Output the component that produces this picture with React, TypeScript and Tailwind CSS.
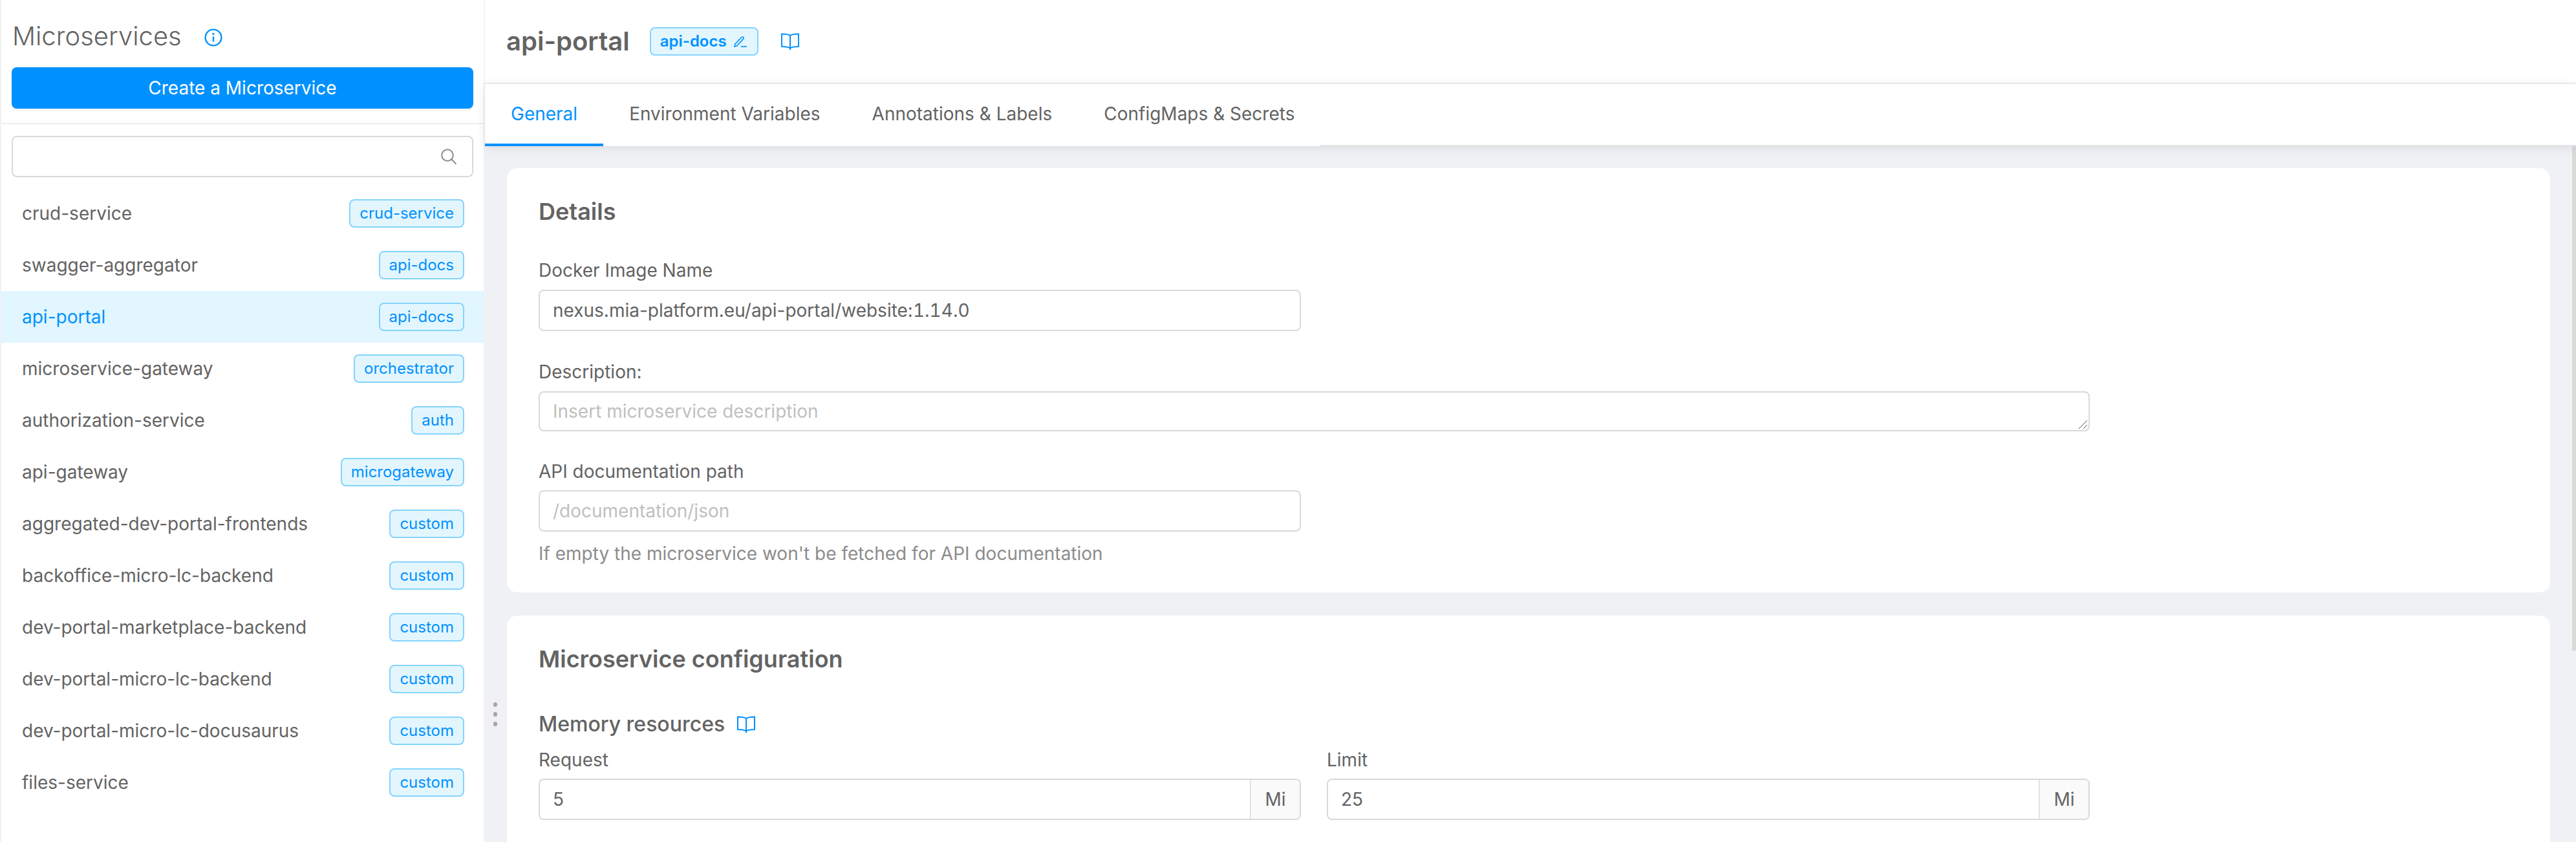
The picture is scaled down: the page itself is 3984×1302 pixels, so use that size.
import React from 'react';

const SERVICES = [
  { name: 'crud-service', tag: 'crud-service' },
  { name: 'swagger-aggregator', tag: 'api-docs' },
  { name: 'api-portal', tag: 'api-docs', active: true },
  { name: 'microservice-gateway', tag: 'orchestrator' },
  { name: 'authorization-service', tag: 'auth' },
  { name: 'api-gateway', tag: 'microgateway' },
  { name: 'aggregated-dev-portal-frontends', tag: 'custom' },
  { name: 'backoffice-micro-lc-backend', tag: 'custom' },
  { name: 'dev-portal-marketplace-backend', tag: 'custom' },
  { name: 'dev-portal-micro-lc-backend', tag: 'custom' },
  { name: 'dev-portal-micro-lc-docusaurus', tag: 'custom' },
  { name: 'files-service', tag: 'custom' },
];

const TABS = ['General', 'Environment Variables', 'Annotations & Labels', 'ConfigMaps & Secrets'];

const BookIcon: React.FC = () => (
  <svg viewBox="0 0 28 26" className="w-7 h-[26px] text-[#0091ff]" fill="none" stroke="currentColor" strokeWidth="2">
    <path d="M14 4C11 2 5 1.5 1 1.5V21c4 0 10 .5 13 2.5 3-2 9-2.5 13-2.5V1.5C23 1.5 17 2 14 4Z" />
    <path d="M14 4v22" />
  </svg>
);

const InfoIcon: React.FC = () => (
  <svg viewBox="0 0 28 28" className="w-7 h-7 text-[#0091ff]" fill="none" stroke="currentColor" strokeWidth="2.4">
    <circle cx="14" cy="14" r="12.4" />
    <path d="M14 12.5V20.5" />
    <circle cx="14" cy="8.4" r="1.6" fill="currentColor" stroke="none" />
  </svg>
);

const PenIcon: React.FC = () => (
  <svg viewBox="0 0 20 18" className="w-5 h-[18px]" fill="none" stroke="currentColor" strokeWidth="1.6">
    <path d="M1 17l1-4L12 2.5a1.8 1.8 0 0 1 2.6 0 1.8 1.8 0 0 1 0 2.6L4.5 16 1 17Z" />
    <path d="M11 17h9" />
  </svg>
);

const SearchIcon: React.FC = () => (
  <svg viewBox="0 0 24 24" className="w-6 h-6 text-[#8c8c8c]" fill="none" stroke="currentColor" strokeWidth="2">
    <circle cx="10" cy="10" r="8.8" />
    <path d="M16.2 16.2 23.5 23.5" />
  </svg>
);

const Tag: React.FC<{ label: string }> = ({ label }) => (
  <span className="h-11 px-[14px] flex items-center rounded-lg border-2 border-[#85d4fd] bg-[#e3f6fe] text-[#0091ff] text-2xl leading-none">
    {label}
  </span>
);

const Field: React.FC<{ value?: React.ReactNode; placeholder?: string; unit?: string; short?: boolean }> = ({ value, placeholder, unit, short }) => (
  <div className={`${short ? 'h-[62px]' : 'h-16'} w-full flex rounded-lg border-2 border-[#d9d9d9] bg-white overflow-hidden text-[28px]`}>
    <div className={`flex-1 flex items-center px-[20px] whitespace-pre ${value ? 'text-[#636363]' : 'text-[#bfbfbf]'}`}>{value || placeholder}</div>
    {unit && <div className="w-[77px] flex items-center justify-center border-l-2 border-[#e4e4e4] bg-[#fafafa] text-[#636363]">{unit}</div>}
  </div>
);

const Sidebar: React.FC = () => (
  <aside className="w-[746px] ml-[2px] shrink-0 bg-white flex flex-col">
    <div className="h-[192px] px-4 border-b-2 border-[#eeeeee] shrink-0">
      <div className="h-[104px] pt-[28px] flex items-start gap-[35px]">
        <h1 className="text-[40px] leading-[56px] font-light text-[#636363] pl-[1px]">Microservices</h1>
        <div className="mt-[16px]"><InfoIcon /></div>
      </div>
      <button className="w-full h-16 rounded-lg bg-[#0091ff] text-white text-[28px] shadow-[0_4px_0_rgba(0,0,0,0.04)]">Create a Microservice</button>
    </div>
    <div className="px-4 pt-[18px] pb-[16px] shrink-0">
      <div className="h-16 rounded-lg border-2 border-[#d9d9d9] flex items-center justify-end pr-[24px]">
        <SearchIcon />
      </div>
    </div>
    <ul>
      {SERVICES.map((s) => (
        <li key={s.name} className={`h-20 flex items-center justify-between pl-[32px] pr-[30px] text-[28px] ${s.active ? 'bg-[#e1f6fe] text-[#0091ff]' : 'text-[#636363]'}`}>
          <span>{s.name}</span>
          <Tag label={s.tag} />
        </li>
      ))}
    </ul>
  </aside>
);

export default function App() {
  return (
    <div className="w-[3984px] h-[1302px] overflow-hidden flex bg-[#f0f1f5] font-['Inter',sans-serif]">
      <Sidebar />
      <div className="flex-1 min-w-0 flex flex-col ml-[2px]">
        <header className="h-[130px] shrink-0 bg-white border-b-2 border-[#f0f0f0] flex items-center pl-[33px]">
          <h2 className="text-[40px] font-semibold text-[#636363]">api-portal</h2>
          <span className="ml-[31px] h-11 pl-[14px] pr-4 flex items-center gap-[11px] rounded-lg border-2 border-[#85d4fd] bg-[#e3f6fe] text-[#0091ff] text-2xl font-semibold">
            api-docs
            <PenIcon />
          </span>
          <span className="ml-[35px]"><BookIcon /></span>
        </header>
        <nav className="relative z-10 h-24 shrink-0 bg-white flex border-b-2 border-[#e4e4e4] shadow-[0_2px_14px_rgba(0,0,0,0.1)]">
          {TABS.map((t, i) => (
            <div key={t} className={`h-24 shrink-0 px-10 bg-white flex items-center text-[28px] border-b-4 ${i === 0 ? 'border-[#0091ff] text-[#0091ff]' : 'border-white text-[#636363]'}`}>
              {t}
            </div>
          ))}
        </nav>
        <div className="relative flex-1 min-h-0 overflow-hidden">
          <main className="pl-[34px] pr-[40px] pt-[34px] flex flex-col gap-9 text-[#636363]">
            <section className="h-[656px] shrink-0 rounded-2xl bg-white px-[49px] pt-[44px]">
              <h3 className="text-[36px] leading-[46px] font-semibold">Details</h3>
              <div className="mt-[48px] text-[28px] leading-10">Docker Image Name</div>
              <div className="mt-[10px] w-[1179px]">
                <Field value={<>nexus.mia-platform.eu/api-portal/website:<span className="tabular-nums">1.14.0</span></>} />
              </div>
              <div className="mt-[43px] text-[28px] leading-10">Description:</div>
              <div className="relative mt-[10px] w-[2399px]">
                <Field short placeholder="Insert microservice description" />
                <svg viewBox="0 0 16 16" className="absolute right-[3px] bottom-[3px] w-4 h-4 text-[#555]" fill="none" stroke="currentColor" strokeWidth="1">
                  <path d="M2 15 15 2M9 15l6-6" />
                </svg>
              </div>
              <div className="mt-[42px] text-[28px] leading-10">API documentation path</div>
              <div className="mt-[9px] w-[1179px]"><Field placeholder="/documentation/json" /></div>
              <div className="mt-[14px] text-[28px] leading-10 text-[#8c8c8c]">If empty the microservice won't be fetched for API documentation</div>
            </section>
            <section className="h-[600px] shrink-0 rounded-2xl bg-white px-[49px] pt-[44px]">
              <h3 className="text-[36px] leading-[46px] font-semibold">Microservice configuration</h3>
              <div className="mt-[58px] flex items-center gap-[19px] text-[32px] leading-10 font-medium">
                Memory resources
                <BookIcon />
              </div>
              <div className="mt-[15px] grid grid-cols-[1179px_1180px] gap-x-[40px]">
                <div className="text-[28px] leading-10">Request</div>
                <div className="text-[28px] leading-10">Limit</div>
                <div className="mt-[9px]"><Field value="5" unit="Mi" /></div>
                <div className="mt-[9px]"><Field value="25" unit="Mi" /></div>
              </div>
            </section>
          </main>
          <div className="absolute right-0 top-0 w-[6px] h-[781px] rounded-b bg-[#d9d9d9]" />
          <div className="absolute left-[13px] top-[860px] flex flex-col gap-[8px]">
            <span className="w-[6px] h-[7px] rounded-full bg-[#a6a6a6]" />
            <span className="w-[6px] h-[7px] rounded-full bg-[#a6a6a6]" />
            <span className="w-[6px] h-[7px] rounded-full bg-[#a6a6a6]" />
          </div>
        </div>
      </div>
    </div>
  );
}
